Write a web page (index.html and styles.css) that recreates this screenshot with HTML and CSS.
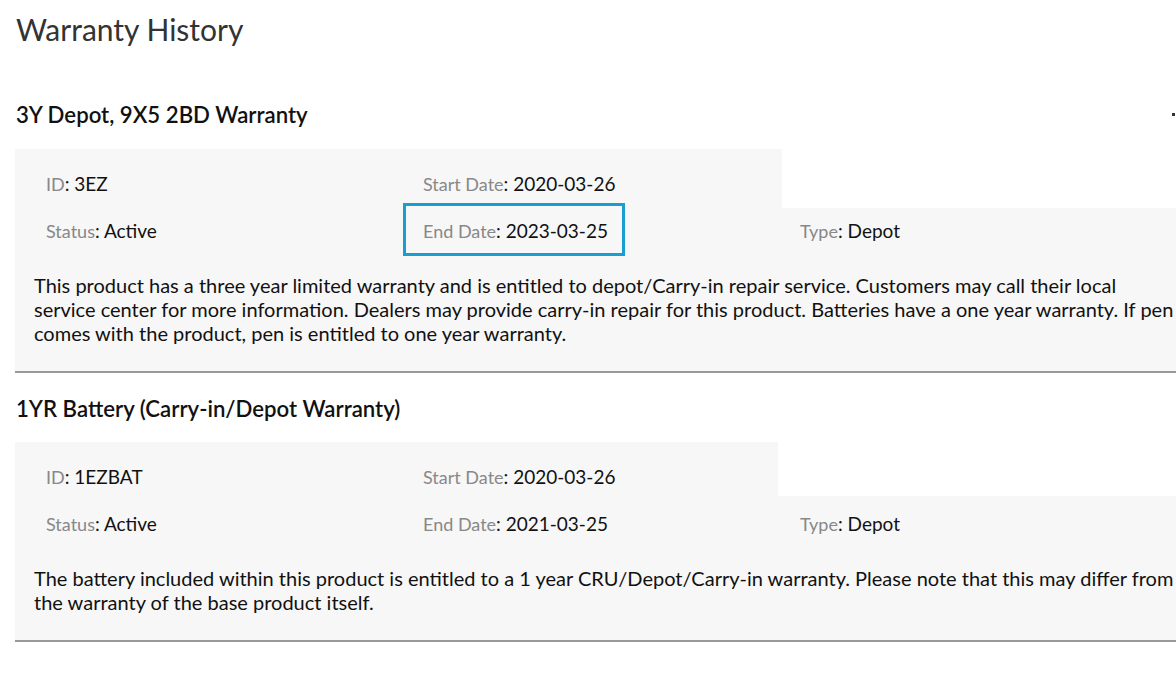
FILE: index.html
```html
<!DOCTYPE html>
<html lang="en">

<head>
    <meta charset="UTF-8">
    <meta name="viewport" content="width=device-width, initial-scale=1.0">
    <title>Warranty History</title>
    <link rel="stylesheet" href="styles.css">
</head>

<body>
    <div class="page">
        <h1 class="page-title">Warranty History</h1>

        <div class="warranty">
            <div class="warranty-head">
                <h2>3Y Depot, 9X5 2BD Warranty</h2>
                <span class="edge-mark"></span>
            </div>
            <div class="card">
                <div class="card-top">
                    <div class="field"><span class="label">ID</span>: 3EZ</div>
                    <div class="field"><span class="label">Start Date</span>: 2020-03-26</div>
                </div>
                <div class="card-body">
                    <div class="card-row">
                        <div class="field"><span class="label">Status</span>: Active</div>
                        <div class="field highlight"><span class="label">End Date</span>: 2023-03-25</div>
                        <div class="field"><span class="label">Type</span>: Depot</div>
                    </div>
                    <p class="description">This product has a three year limited warranty and is entitled to depot/Carry-in repair service. Customers may call their local<br>service center for more information. Dealers may provide carry-in repair for this product. Batteries have a one year warranty. If pen comes with the product, pen is entitled to one year warranty.</p>
                </div>
            </div>
        </div>

        <div class="warranty">
            <div class="warranty-head">
                <h2>1YR Battery (Carry-in/Depot Warranty)</h2>
            </div>
            <div class="card">
                <div class="card-top short">
                    <div class="field"><span class="label">ID</span>: 1EZBAT</div>
                    <div class="field"><span class="label">Start Date</span>: 2020-03-26</div>
                </div>
                <div class="card-body">
                    <div class="card-row">
                        <div class="field"><span class="label">Status</span>: Active</div>
                        <div class="field"><span class="label">End Date</span>: 2021-03-25</div>
                        <div class="field"><span class="label">Type</span>: Depot</div>
                    </div>
                    <p class="description">The battery included within this product is entitled to a 1 year CRU/Depot/Carry-in warranty. Please note that this may differ from the warranty of the base product itself.</p>
                </div>
            </div>
        </div>
    </div>
</body>

</html>
```

FILE: styles.css
```css
html,
body {
    overflow: hidden;
}

body {
    margin: 0;
    font-family: Lato, "Open Sans", sans-serif;
    color: #111;
    background-color: #fff;
}

.page {
    width: 1162px;
    padding: 0 0 0 15px;
}

.page-title {
    margin: 0;
    padding-top: 9px;
    padding-left: 1px;
    font-size: 30px;
    font-weight: 400;
    line-height: 40px;
    color: #333;
}

.warranty-head {
    display: flex;
    justify-content: space-between;
    align-items: center;
    height: 33px;
    margin-top: 49px;
    margin-bottom: 18px;
}

.warranty + .warranty .warranty-head {
    margin-top: 19px;
    margin-bottom: 17px;
}

.warranty-head h2 {
    margin: 0;
    padding-left: 1px;
    font-size: 22.2px;
    font-weight: 600;
    color: #111;
}

.edge-mark {
    width: 3px;
    height: 3px;
    margin-right: 2px;
    background-color: #333;
}

.card {
    border-bottom: 2px solid #999;
}

.card-top {
    display: grid;
    grid-template-columns: 377px 377px;
    align-items: start;
    width: 767px;
    height: 59px;
    padding-top: 23px;
    padding-left: 31px;
    box-sizing: border-box;
    background-color: #f7f7f7;
}

.card-top.short {
    width: 763px;
    height: 54px;
}

.card-body {
    padding: 11px 0 26px 0;
    background-color: #f7f7f7;
}

.card-row {
    display: grid;
    grid-template-columns: 377px 377px 377px;
    padding-left: 31px;
    margin-bottom: 30px;
}

.card-top.short + .card-body .card-row {
    margin-top: 5px;
}

.field {
    font-size: 19px;
    line-height: 24px;
    color: #111;
}

.label {
    font-size: 18px;
    color: #888;
}

.highlight {
    position: relative;
}

.highlight::after {
    content: "";
    position: absolute;
    left: -20px;
    top: -16px;
    width: 216px;
    height: 47px;
    border: 3px solid #1a9dd0;
}

.description {
    margin: 0;
    padding: 0 0 0 19px;
    font-size: 20px;
    line-height: 24px;
    color: #111;
}
```
